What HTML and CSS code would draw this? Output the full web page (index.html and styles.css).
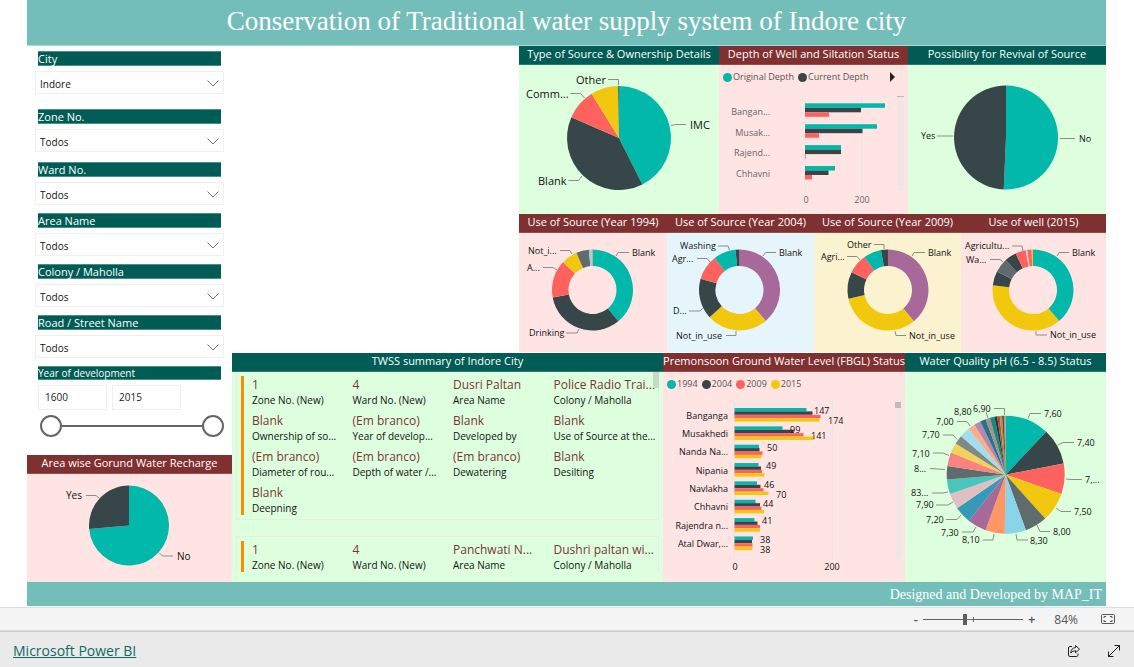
FILE: index.html
```html
<!DOCTYPE html>
<html lang="en">
<head>
<meta charset="utf-8">
<title>Conservation of Traditional water supply system of Indore city</title>
<link rel="stylesheet" href="styles.css">
</head>
<body>
<div class="report">
  <header class="banner"><h1>Conservation of Traditional water supply system of Indore city</h1></header>
  <main class="canvas">
    <aside class="sidebar">
      <form class="filters">
        <div class="filter filter-first">
          <label for="city">City</label>
          <div class="picker"><select id="city"><option>Indore</option></select><svg viewBox="0 0 12 7"><path d="M.5.5 6 6 11.5.5"/></svg></div>
        </div>
        <div class="filter filter-zone">
          <label for="zone">Zone No.</label>
          <div class="picker"><select id="zone"><option>Todos</option></select><svg viewBox="0 0 12 7"><path d="M.5.5 6 6 11.5.5"/></svg></div>
        </div>
        <div class="filter">
          <label for="ward">Ward No.</label>
          <div class="picker"><select id="ward"><option>Todos</option></select><svg viewBox="0 0 12 7"><path d="M.5.5 6 6 11.5.5"/></svg></div>
        </div>
        <div class="filter">
          <label for="area">Area Name</label>
          <div class="picker"><select id="area"><option>Todos</option></select><svg viewBox="0 0 12 7"><path d="M.5.5 6 6 11.5.5"/></svg></div>
        </div>
        <div class="filter">
          <label for="colony">Colony / Maholla</label>
          <div class="picker"><select id="colony"><option>Todos</option></select><svg viewBox="0 0 12 7"><path d="M.5.5 6 6 11.5.5"/></svg></div>
        </div>
        <div class="filter">
          <label for="road">Road / Street Name</label>
          <div class="picker"><select id="road"><option>Todos</option></select><svg viewBox="0 0 12 7"><path d="M.5.5 6 6 11.5.5"/></svg></div>
        </div>
        <div class="filter">
          <label class="small" for="from">Year of development</label>
          <div class="years">
            <input id="from" type="text" value="1600">
            <input type="text" value="2015" aria-label="Year of development, end">
          </div>
          <div class="span">
            <input type="range" min="1600" max="2015" value="1600" aria-label="Start year">
            <input type="range" min="1600" max="2015" value="2015" aria-label="End year">
          </div>
        </div>
      </form>
      <section class="panel rose">
        <h2 class="maroon">Area wise Gorund Water Recharge</h2>
        <svg class="chart text-m" viewBox="27 474 205 108">
          <g data-pie="recharge"></g>
          <path class="lead" d="M86 495.5H96L99 498M159.500 553L162.500 556H173"/>
          <text x="66" y="499">Yes</text><text x="177" y="560">No</text>
        </svg>
      </section>
    </aside>

    <div class="visuals">
      <div class="row row-top">
        <section class="panel mint">
          <h2>Type of Source &amp; Ownership Details</h2>
          <svg class="chart text-l" viewBox="519 65 200 149">
            <g data-pie="source"></g>
            <path class="lead" d="M608 79.500H618.500V85M570.500 93.500H580.500L584.500 98M671 125.500L676 124.500H686M568.500 180.500H578.500L582 176"/>
            <text x="576" y="84">Other</text><text x="526" y="98">Comm...</text><text x="690" y="129">IMC</text><text x="538" y="185">Blank</text>
          </svg>
        </section>
        <section class="panel rose">
          <h2 class="maroon">Depth of Well and Siltation Status</h2>
          <ul class="legend">
            <li><i class="teal"></i>Original Depth</li><li><i class="dark"></i>Current Depth</li>
            <li class="next"><button type="button" aria-label="More"><svg viewBox="0 0 6 10"><path d="M1 0V10L6 5Z"/></svg></button></li>
          </ul>
          <svg class="chart text-s muted" viewBox="719 89 189 125">
            <path class="grid" d="M805.500 96V192M862 96V192"/>
            <rect class="track" x="897" y="97" width="7" height="94"/><rect class="thumb" x="897" y="96" width="7" height="1"/>
            <g data-bars="depth"></g>
            <g class="end"><text x="770" y="115">Bangan...</text><text x="770" y="136">Musak...</text><text x="770" y="156">Rajend...</text><text x="770" y="177">Chhavni</text></g>
            <g class="mid"><text x="806" y="203">0</text><text x="862" y="203">200</text></g>
          </svg>
        </section>
        <section class="panel mint">
          <h2>Possibility for Revival of Source</h2>
          <svg class="chart text-s" viewBox="908 65 198 149">
            <g data-pie="revival"></g>
            <path class="lead" d="M937 136H953M1060 138.500H1075"/>
            <text x="921" y="139">Yes</text><text x="1079" y="142">No</text>
          </svg>
        </section>
      </div>

      <div class="row row-use">
        <section class="panel rose">
          <h2 class="maroon">Use of Source (Year 1994)</h2>
          <svg class="chart text-s" viewBox="519 233 148 119">
            <g data-pie="use1994"></g>
            <path class="lead" d="M560 250.500H570L572 254M543 267.500H553L557 270M566 333H577L579 329M616 256L618 252.500H629"/>
            <text x="528" y="254">Not_i...</text><text x="527" y="271">A...</text><text x="529" y="336">Drinking</text><text x="632" y="256">Blank</text>
          </svg>
        </section>
        <section class="panel sky">
          <h2 class="maroon">Use of Source (Year 2004)</h2>
          <svg class="chart text-s" viewBox="667 233 147 119">
            <g data-pie="use2004"></g>
            <path class="lead" d="M718 246H728L729.500 250M697 258.500H707L710 262M689 311H700L703 308M726 335.500H736V331M763 256L765.500 252.500H776"/>
            <text x="680" y="249">Washing</text><text x="672" y="262">Agr...</text><text x="673" y="314">D...</text><text x="676" y="339">Not_in_use</text><text x="779" y="256">Blank</text>
          </svg>
        </section>
        <section class="panel sand">
          <h2 class="maroon">Use of Source (Year 2009)</h2>
          <svg class="chart text-s" viewBox="814 233 147 119">
            <g data-pie="use2009"></g>
            <path class="lead" d="M874 244.500H884V249M847 256.500H857L860 260M912 256L914 252.500H925M895 331L896 335.500H906"/>
            <text x="847" y="248">Other</text><text x="821" y="260">Agri...</text><text x="928" y="256">Blank</text><text x="909" y="339">Not_in_use</text>
          </svg>
        </section>
        <section class="panel rose">
          <h2 class="maroon">Use of well (2015)</h2>
          <svg class="chart text-s" viewBox="961 233 145 119">
            <g data-pie="use2015"></g>
            <path class="lead" d="M1012 246H1022L1023 251M990 259.500H1000L1003 262M1057 256L1059 252.500H1069M1036 331V335H1047"/>
            <text x="965" y="249">Agricultu...</text><text x="966" y="263">Wa...</text><text x="1072" y="256">Blank</text><text x="1050" y="338">Not_in_use</text>
          </svg>
        </section>
      </div>

      <div class="row row-bottom">
        <section class="panel mint summary">
          <h2>TWSS summary of Indore City</h2>
          <div class="cards">
            <article class="card">
              <dl>
                <div><dd>1</dd><dt>Zone No. (New)</dt></div>
                <div><dd>4</dd><dt>Ward No. (New)</dt></div>
                <div><dd>Dusri Paltan</dd><dt>Area Name</dt></div>
                <div><dd>Police Radio Trai...</dd><dt>Colony / Maholla</dt></div>
                <div><dd>Blank</dd><dt>Ownership of so...</dt></div>
                <div><dd>(Em branco)</dd><dt>Year of develop...</dt></div>
                <div><dd>Blank</dd><dt>Developed by</dt></div>
                <div><dd>Blank</dd><dt>Use of Source at the...</dt></div>
                <div><dd>(Em branco)</dd><dt>Diameter of rou...</dt></div>
                <div><dd>(Em branco)</dd><dt>Depth of water /...</dt></div>
                <div><dd>(Em branco)</dd><dt>Dewatering</dt></div>
                <div><dd>Blank</dd><dt>Desilting</dt></div>
                <div><dd>Blank</dd><dt>Deepning</dt></div>
              </dl>
            </article>
            <article class="card card-cut">
              <dl>
                <div><dd>1</dd><dt>Zone No. (New)</dt></div>
                <div><dd>4</dd><dt>Ward No. (New)</dt></div>
                <div><dd>Panchwati N...</dd><dt>Area Name</dt></div>
                <div><dd>Dushri paltan wi...</dd><dt>Colony / Maholla</dt></div>
              </dl>
            </article>
            <span class="scroll"></span>
          </div>
        </section>
        <section class="panel rose">
          <h2 class="maroon">Premonsoon Ground Water Level (FBGL) Status</h2>
          <ul class="legend">
            <li><i class="teal"></i>1994</li><li><i class="dark"></i>2004</li><li><i class="red"></i>2009</li><li><i class="yellow"></i>2015</li>
          </ul>
          <svg class="chart text-s" viewBox="663 396 242 186">
            <path class="grid" d="M734.500 401V559M832.500 401V559"/>
            <rect class="track" x="896" y="402" width="5" height="157"/><rect class="thumb" x="895" y="402" width="6" height="6"/>
            <g data-bars="level"></g>
            <g class="end">
              <text x="728" y="419">Banganga</text><text x="728" y="437">Musakhedi</text><text x="728" y="455">Nanda Na...</text><text x="728" y="474">Nipania</text>
              <text x="728" y="492">Navlakha</text><text x="728" y="510">Chhavni</text><text x="728" y="529">Rajendra n...</text><text x="728" y="547">Atal Dwar,...</text>
            </g>
            <g class="values">
              <text x="814" y="414">147</text><text x="828" y="424">174</text><text x="790" y="433">99</text><text x="811" y="439">141</text>
              <text x="767" y="451">50</text><text x="766" y="469">49</text><text x="764" y="488">46</text><text x="776" y="498">70</text>
              <text x="763" y="507">44</text><text x="762" y="524">41</text><text x="760" y="543">38</text><text x="760" y="553">38</text>
            </g>
            <g class="mid"><text x="735" y="570">0</text><text x="832" y="570">200</text></g>
          </svg>
        </section>
        <section class="panel mint">
          <h2>Water Quality pH (6.5 - 8.5) Status</h2>
          <svg class="chart text-s" viewBox="905 372 201 210">
            <g data-pie="ph"></g>
            <path class="lead" d="M1028 418.500L1030 413.500H1041M1058 445L1063 442.500H1074M1066 479L1071 479.500H1082M1056 508L1061 511.500H1071M1037 525L1040 531.500H1050M1016 534L1017 540H1028M994 534L993 540H983M976 527L973 532H962M961 515L957 519.500H946M953 502L948 505H936M948 492L943 493H932M930 468.500L945 469.500M933 453H943L949 455.500M943 435H953L957 439.500M957 421.500H967L970 426M986 412L988 418M994 408.500H1004.500V415"/>
            <text x="1044" y="417">7,60</text><text x="1077" y="446">7,40</text><text x="1085" y="483">7,...</text><text x="1074" y="515">7,50</text>
            <text x="1053" y="535">8,00</text><text x="1030" y="544">8,30</text><text x="962" y="543">8,10</text><text x="941" y="536">7,30</text>
            <text x="926" y="523">7,20</text><text x="916" y="508">7,90</text><text x="911" y="496">83...</text><text x="914" y="472">8...</text>
            <text x="912" y="457">7,10</text><text x="922" y="438">7,70</text><text x="936" y="425">7,00</text><text x="954" y="415">8,80</text><text x="973" y="412">6,90</text>
          </svg>
        </section>
      </div>
    </div>
  </main>
  <div class="credit">Designed and Developed by MAP_IT</div>
</div>

<div class="statusbar">
  <button type="button" aria-label="Zoom out">-</button>
  <input class="zoom" type="range" min="0" max="100" value="42" aria-label="Zoom">
  <button type="button" aria-label="Zoom in">+</button>
  <output>84%</output>
  <button type="button" aria-label="Fit to page"><svg class="fit" viewBox="0 0 14 10"><rect x=".5" y=".5" width="13" height="9" rx="1"/><path d="M3 4V2.500H5M9 2.500H11V4M11 6V7.500H9M5 7.500H3V6"/></svg></button>
</div>
<footer class="brandbar">
  <a href="#">Microsoft Power BI</a>
  <button type="button" aria-label="Share"><svg class="share" viewBox="0 0 14 14"><path d="M5 2.500H3Q1.500 2.500 1.500 4V11Q1.500 12.500 3 12.500H9.500Q11 12.500 11 11V9.500M8.500 1.500L12.500 5.200L8.500 8.800V6.800Q5.500 6.600 3.800 9Q4 4 8.500 3.600Z"/></svg></button>
  <button type="button" aria-label="Full screen"><svg class="expand" viewBox="0 0 14 14"><path d="M1.500 12.500L12.500 1.500M7.500 1.500H12.500V6.500M1.500 7.500V12.500H6.500"/></svg></button>
</footer>
<script src="charts.js"></script>
</body>
</html>
```
FILE: styles.css
```css
* { box-sizing: border-box; }
body { margin: 0; min-height: 100vh; display: flex; flex-direction: column; background: #fff; color: #111; font-family: "Open Sans", "Noto Sans", sans-serif; }
h1, h2, ul, dl, dd { margin: 0; padding: 0; }
button { border: 0; padding: 0; background: none; color: inherit; font: inherit; display: flex; }
svg { display: block; }

.report { margin: 0 28px 0 27px; }
.banner { height: 46px; background: #74beb9; border-bottom: 1px solid #a9d7d3; text-align: center; }
.banner h1 { font: 400 27px/42px "Liberation Serif", serif; color: #fff; }
.canvas { display: grid; grid-template-columns: minmax(0, 205fr) minmax(0, 874fr); }
.credit { height: 24px; padding-right: 4px; background: #74beb9; color: #fff; text-align: right; font: 400 14px/25px "Liberation Serif", serif; }

.sidebar { display: flex; flex-direction: column; justify-content: space-between; }
.filters { display: flex; flex-direction: column; gap: 8px; padding: 5px 8px 0; }
.filter > label { display: block; height: 15px; margin: 0 3px; background: #015c55; border: solid #4a9089; border-width: 1px 0; color: #fff; font-size: 11px; line-height: 14px; }
.filter > label.small { height: 14px; font-size: 10px; line-height: 12px; }
.filter-first { margin-bottom: 7px; }
.filter-zone { margin-bottom: 2px; }
.picker { position: relative; margin-top: 5px; }
.picker select { appearance: none; display: block; width: 100%; height: 23px; padding: 2px 4px 0; border: 1px solid #f0f0f0; border-radius: 0; background: #fff; color: #111; font: 10px "Open Sans", sans-serif; }
.picker svg { position: absolute; right: 5px; top: 9px; width: 12px; height: 7px; pointer-events: none; }
.picker path { fill: none; stroke: #777; }
.years { display: flex; gap: 5px; margin: 5px 3px 0; }
.years input { width: 69px; height: 25px; padding: 0 6px 2px; border: 1px solid #eee; background: #fff; color: #222; font: 10px "Open Sans", sans-serif; }
.span { display: grid; align-items: center; margin: 5px 0 0 5px; background: linear-gradient(#666, #666) center / 150px 2px no-repeat; height: 22px; }
.span input { grid-area: 1 / 1; appearance: none; width: 100%; height: 22px; margin: 0; background: none; pointer-events: none; }
.span input::-webkit-slider-thumb { appearance: none; width: 22px; height: 22px; border: 2px solid #666; border-radius: 50%; background: #fff; pointer-events: auto; }

.visuals { display: flex; flex-direction: column; }
.row { display: grid; }
.row-top, .row-use { width: 67.163%; align-self: flex-end; }
.row-top { grid-template-columns: minmax(0, 200fr) minmax(0, 189fr) minmax(0, 198fr); }
.row-use { grid-template-columns: minmax(0, 148fr) minmax(0, 147fr) minmax(0, 147fr) minmax(0, 145fr); }
.row-bottom { grid-template-columns: minmax(0, 431fr) minmax(0, 242fr) minmax(0, 201fr); margin-top: 1px; }

.panel h2 { height: 19px; overflow: hidden; background: #015c55; border-bottom: 1px solid #2c7770; color: #fff; font-size: 11px; font-weight: 400; line-height: 16px; text-align: center; white-space: nowrap; }
.panel h2.maroon { background: #7f3030; border-color: #984d4d; }
.mint { background: #dfd; }
.rose { background: #ffe4e4; }
.sky { background: #e6f5fb; }
.sand { background: #fbf2d0; }

.chart { width: 100%; height: auto; fill: #111; }
.text-s { font-size: 9px; }
.text-m { font-size: 10px; }
.text-l { font-size: 11px; }
.muted { fill: #666; }
.lead { fill: none; stroke: #8a8f8a; }
.grid { stroke: #ece4e4; }
.track { fill: #f0e6e8; }
.thumb { fill: #c2baba; }
.end { text-anchor: end; }
.mid { text-anchor: middle; }

.legend { display: flex; gap: 4px; height: 24px; padding: 0 4px; align-items: center; list-style: none; color: #555; font-size: 9px; line-height: 12px; white-space: nowrap; }
.legend li { display: flex; align-items: center; gap: 1px; }
.legend i { width: 9px; height: 9px; border-radius: 50%; }
.legend .next { margin-left: auto; padding-right: 9px; }
.next svg { width: 6px; height: 10px; fill: #222; }
.teal { background: #01b8aa; }
.dark { background: #374649; }
.red { background: #fd625e; }
.yellow { background: #f2c80f; }

.summary { display: flex; flex-direction: column; }
.cards { position: relative; flex: 1; display: flex; flex-direction: column; gap: 16px; padding: 0 4px; }
.card { border: 1px solid #e3efe3; padding: 4px; }
.card:first-child { border-top: 0; }
.card-cut { border-bottom: 0; padding-bottom: 0; }
.card dl { display: grid; grid-template-columns: repeat(4, minmax(0, 1fr)); border-left: 3px solid #fb8c00; padding-left: 8px; row-gap: 5px; }
.card dl > div { display: flex; flex-direction: column; white-space: nowrap; }
.card dd { color: #7b3535; font-size: 12px; line-height: 17px; }
.card dt { color: #111; font-size: 10px; line-height: 14px; }
.scroll { position: absolute; top: 0; right: 4px; width: 6px; height: 16px; background: #c8d9c8; }

.statusbar { display: flex; align-items: center; justify-content: flex-end; height: 24px; margin-top: 1px; padding-right: 19px; background: #f4f4f4; border: solid #ddd; border-width: 1px 0; color: #555; font-size: 13px; }
.statusbar button { font-weight: 600; }
.statusbar output { margin: 0 23px 0 19px; font-size: 12px; }
.zoom { appearance: none; width: 100px; height: 12px; margin: 0 5px; background: linear-gradient(#666, #666) center / 100% 1px no-repeat, linear-gradient(#666, #666) 50px center / 1px 5px no-repeat; }
.zoom::-webkit-slider-thumb { appearance: none; width: 4px; height: 11px; background: #605e5c; }
.fit { width: 14px; height: 10px; fill: none; stroke: #555; }
.brandbar { flex: 1; display: flex; align-items: center; gap: 26px; padding: 2px 13px 0; background: #eaeaea; border-top: 1px solid #ccc; }
.brandbar a { margin-right: auto; color: #106a62; font-size: 14px; }
.share, .expand { width: 14px; height: 14px; fill: none; stroke: #222; }
```
FILE: charts.js
```js
const T = '#01b8aa', D = '#374649', R = '#fd625e', Y = '#f2c80f', G = '#5f6b6d', B = '#8ad4eb', O = '#fe9666', P = '#a66999';

// Slices are [colour, end angle in degrees, clockwise from the top].
const pies = {
  recharge: { x: 129, y: 525.5, r: 40, slices: [[T, 265], [D, 360]] },
  source: { x: 619, y: 138, r: 52, slices: [[T, 153.3], [D, 293.6], [R, 328.2], [Y, 358.8], [G, 360]] },
  revival: { x: 1006, y: 137.5, r: 52, slices: [[T, 182.5], [D, 360]] },
  use1994: { x: 592.5, y: 290, r: 40.5, hole: 24, slices: [[T, 140.4], [D, 259.4], [R, 313.3], [Y, 336.7], [G, 354.8], [B, 358.5], [O, 360]] },
  use2004: { x: 739.5, y: 290, r: 40.5, hole: 24, slices: [[P, 139.7], [Y, 227.7], [D, 286.3], [R, 322.4], [T, 354.3], [D, 360]] },
  use2009: { x: 888, y: 290, r: 40.5, hole: 24, slices: [[P, 140.4], [Y, 257.7], [D, 296.1], [R, 324.6], [T, 350], [D, 360]] },
  use2015: { x: 1033, y: 290, r: 40.5, hole: 24, slices: [[T, 140], [Y, 276.7], [D, 297.2], [G, 317.7], [D, 334.7], [R, 349.7], ['#ffe4e4', 351.7], [R, 358], [Y, 360]] },
  ph: { x: 1005.7, y: 474.7, r: 59, slices: [[T, 43.4], [D, 79], [R, 109.2], [Y, 138], [G, 160], [B, 181], [O, 200], [P, 218.8],
    ['#3599b8', 235.4], ['#dfbfbf', 250.8], ['#4ac5bb', 265.4], [G, 278.5], ['#fb8281', 292], ['#f4d25a', 302], ['#7f898a', 310.8],
    ['#a4ddee', 321], ['#fdab89', 328], ['#b687ac', 334.5], ['#28738a', 340.2], ['#a78f8f', 344.5], ['#168980', 349], ['#293537', 351.7],
    ['#bb4a4a', 354.2], ['#b59525', 356.5], ['#475052', 358.5], ['#a78f8f', 360]] }
};

const bars = {
  depth: { x: 805, y: 103.3, pitch: 20.9, h: 4.5, rows: [[80, 56, 24], [72, 57.5, 14], [36, 36, 0.7], [30, 23.5, 7]] },
  level: { x: 734.5, y: 408, pitch: 18.35, h: 3.4, rows: [[72, 78, 86, 85], [48, 59, 69, 80], [24.5, 25, 28, 27], [24, 26.5, 27.5, 30],
    [22.5, 26, 29, 34], [21, 25.5, 27, 29.5], [20, 23, 25.5, 25.5], [18.5, 17.5, 18, 18]] }
};

function add(parent, tag, attrs) {
  const el = document.createElementNS('http://www.w3.org/2000/svg', tag);
  for (const k in attrs) el.setAttribute(k, attrs[k]);
  parent.appendChild(el);
}

document.querySelectorAll('[data-pie]').forEach(g => {
  const p = pies[g.dataset.pie];
  const at = (deg, r) => {
    const a = deg * Math.PI / 180;
    return (p.x + r * Math.sin(a)).toFixed(2) + ' ' + (p.y - r * Math.cos(a)).toFixed(2);
  };
  let from = 0;
  p.slices.forEach(([fill, to]) => {
    const big = to - from > 180 ? 1 : 0;
    const hole = p.hole || 0;
    const inner = hole ? `L${at(to, hole)}A${hole} ${hole} 0 ${big} 0 ${at(from, hole)}` : `L${p.x} ${p.y}`;
    add(g, 'path', { fill, d: `M${at(from, p.r)}A${p.r} ${p.r} 0 ${big} 1 ${at(to, p.r)}${inner}Z` });
    from = to;
  });
});

document.querySelectorAll('[data-bars]').forEach(g => {
  const b = bars[g.dataset.bars];
  b.rows.forEach((row, i) => row.forEach((width, j) => {
    add(g, 'rect', { x: b.x, y: b.y + i * b.pitch + j * b.h, width, height: b.h, fill: [T, D, R, Y][j] });
  }));
});
```
